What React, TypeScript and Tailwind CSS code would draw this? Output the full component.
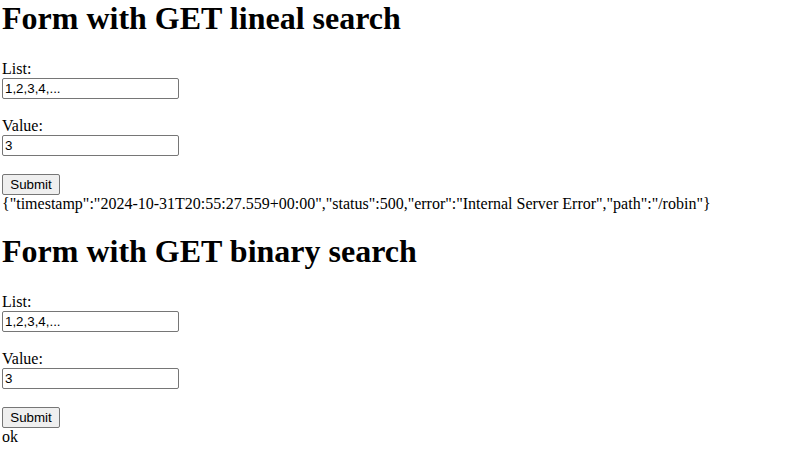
import React from 'react';

type SearchFormProps = {
  title: string;
  result: string;
  first?: boolean;
};

function SearchForm({ title, result, first }: SearchFormProps) {
  return (
    <section className={first ? '' : 'mt-[20px]'}>
      <h1 className="text-[32px] font-bold leading-[37px] h-[37px] whitespace-nowrap">{title}</h1>

      <form className="mt-[23px] flex flex-col items-start" onSubmit={(e) => e.preventDefault()}>
        <label className="h-[18px]">List:</label>
        <input
          type="text"
          defaultValue="1,2,3,4,..."
          className="w-[177px] h-[21px] border border-[#767676] rounded-[2px] px-[2px] text-[13.33px] font-['Liberation_Sans',Arial,sans-serif] text-black outline-none"
        />

        <label className="mt-[18px] h-[18px]">Value:</label>
        <input
          type="text"
          defaultValue="3"
          className="w-[177px] h-[21px] border border-[#767676] rounded-[2px] px-[2px] text-[13.33px] font-['Liberation_Sans',Arial,sans-serif] text-black outline-none"
        />

        <button
          type="submit"
          className="mt-[18px] w-[58px] h-[21px] border border-[#767676] rounded-[2px] bg-[#efefef] text-[13.33px] leading-none font-['Liberation_Sans',Arial,sans-serif] text-black"
        >
          Submit
        </button>
      </form>

      <div className="h-[18px] whitespace-nowrap">{result}</div>
    </section>
  );
}

export default function App() {
  return (
    <div className="min-h-screen bg-white text-black pl-[2px] text-[16px] leading-[18px] font-['Liberation_Serif','Times_New_Roman',serif]">
      <SearchForm
        first
        title="Form with GET lineal search"
        result={'{"timestamp":"2024-10-31T20:55:27.559+00:00","status":500,"error":"Internal Server Error","path":"/robin"}'}
      />
      <SearchForm title="Form with GET binary search" result="ok" />
    </div>
  );
}
